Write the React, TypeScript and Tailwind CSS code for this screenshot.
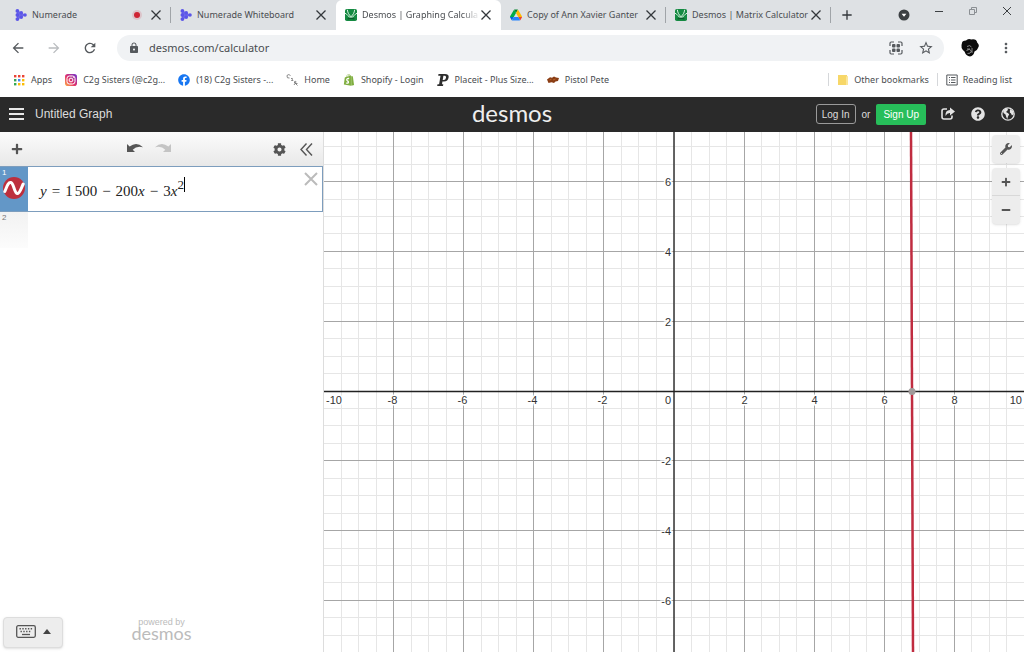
import type { ReactNode } from 'react';
import { MdArrowBack, MdArrowForward, MdRefresh, MdLock, MdStarOutline, MdMoreVert, MdAdd } from 'react-icons/md';
import { FaFacebook, FaShopify, FaWrench, FaCog, FaQuestionCircle, FaPlus, FaMinus } from 'react-icons/fa';

function NumeradeIcon() {
  return (
    <svg viewBox="0 0 12 12" className="size-3 shrink-0" fill="#5b55e8">
      <path d="M2 1 10.500 6 2 11Z" opacity=".8" />
      <circle cx="2.4" cy="1.9" r="1.9" />
      <circle cx="2.4" cy="6" r="1.9" />
      <circle cx="2.4" cy="10.1" r="1.9" />
      <circle cx="6.2" cy="3.9" r="1.9" />
      <circle cx="6.2" cy="8.1" r="1.9" />
      <circle cx="10" cy="6" r="1.8" />
    </svg>
  );
}

function DesmosIcon() {
  return (
    <svg viewBox="0 0 12 12" className="size-3 shrink-0">
      <rect width="12" height="12" rx="1.8" fill="#158a42" />
      <path d="M0 4.200C2.500 5 3 8.300 6 8.300S9.500 5 12 4.200M2.400.8C2.600 4 4 5.500 6 7.800 8 5.500 9.400 4 9.600.8" fill="none" stroke="#d9f2e1" strokeWidth="1" />
      <path d="M2.500 10q3.500-1.200 7 0" fill="none" stroke="#0a5a2a" strokeWidth="1.200" />
    </svg>
  );
}

function DriveIcon() {
  return (
    <svg viewBox="0 0 87 78" className="size-3 shrink-0">
      <path fill="#0066da" d="m6.6 66.85 3.85 6.65c.8 1.4 1.95 2.5 3.3 3.3l13.75-23.8H0c0 1.55.4 3.1 1.2 4.5z" />
      <path fill="#00ac47" d="M43.65 25 29.9 1.2c-1.35.8-2.5 1.9-3.3 3.3L1.2 48.5C.4 49.9 0 51.45 0 53h27.5z" />
      <path fill="#ea4335" d="M73.55 76.8c1.35-.8 2.5-1.9 3.3-3.3l9.25-16c.8-1.4 1.2-2.95 1.2-4.5H59.8l5.85 11.5z" />
      <path fill="#00832d" d="M43.65 25 57.4 1.2C56.05.4 54.5 0 52.9 0H34.4c-1.6 0-3.15.45-4.5 1.2z" />
      <path fill="#2684fc" d="M59.8 53H27.5L13.75 76.8c1.35.8 2.9 1.2 4.5 1.2h50.8c1.6 0 3.15-.45 4.5-1.2z" />
      <path fill="#ffba00" d="M73.4 26.5 60.7 4.5c-.8-1.4-1.95-2.5-3.3-3.3L43.65 25 59.8 53h27.45c0-1.55-.4-3.1-1.2-4.5z" />
    </svg>
  );
}

function CloseIcon() {
  return (
    <svg viewBox="0 0 12 12" className="size-3" fill="none" stroke="#33373b" strokeWidth="1.3">
      <path d="m1.5 1.5 9 9m0-9-9 9" />
    </svg>
  );
}

interface TabInfo {
  title: string;
  icon: ReactNode;
  active?: boolean;
  recording?: boolean;
  divider?: boolean;
}

const tabs: TabInfo[] = [
  { title: 'Numerade', icon: <NumeradeIcon />, recording: true, divider: true },
  { title: 'Numerade Whiteboard', icon: <NumeradeIcon /> },
  { title: 'Desmos | Graphing Calcula', icon: <DesmosIcon />, active: true },
  { title: 'Copy of Ann Xavier Ganter', icon: <DriveIcon />, divider: true },
  { title: 'Desmos | Matrix Calculator', icon: <DesmosIcon />, divider: true },
];

function Tab({ title, icon, active, recording, divider }: TabInfo) {
  return (
    <div className={`relative flex w-[165px] shrink items-center px-[9px] ${active ? 'rounded-t-md bg-white' : ''}`}>
      {icon}
      <button className={`ml-[5px] min-w-0 flex-1 overflow-hidden text-left whitespace-nowrap ${active ? 'mask-r-from-85%' : ''}`}>{title}</button>
      {recording && <span className="mr-[10px] size-[6px] rounded-full bg-[#cf2434] ring-2 ring-[#cf2434]/15" />}
      <button aria-label={`Close ${title}`}>
        <CloseIcon />
      </button>
      {divider && <span className="absolute top-[7px] right-0 h-4 w-px bg-[#a0a4a8]" />}
    </div>
  );
}

function TabStrip() {
  return (
    <div className="flex h-[30px] justify-between bg-[#dee1e4] pl-[6px] text-[9px] text-[#4a4d51]">
      <div className="flex min-w-0">
        {tabs.map((tab, i) => (
          <Tab key={i} {...tab} />
        ))}
        <button aria-label="New tab" className="px-2 text-[#33373b]">
          <MdAdd className="size-4" />
        </button>
      </div>
      <div className="flex items-center gap-6 pr-3 text-[#3c4043]">
        <button aria-label="Search tabs">
          <svg viewBox="0 0 12 12" className="size-3">
            <circle cx="6" cy="6" r="5.5" fill="#3c4043" />
            <path d="M3.6 4.8h4.8L6 7.8Z" fill="#fff" />
          </svg>
        </button>
        <div className="flex gap-6 pb-2">
          <button aria-label="Minimize">
            <svg viewBox="0 0 10 10" className="size-[10px]" stroke="#3c4043">
              <path d="M1 5.5h8" />
            </svg>
          </button>
          <button aria-label="Restore">
            <svg viewBox="0 0 10 10" className="size-[10px]" fill="none" stroke="#8b8f93">
              <path d="M1.5 3.5h5v5h-5zM3.5 3V1.5h5v5H7" />
            </svg>
          </button>
          <button aria-label="Close window">
            <svg viewBox="0 0 10 10" className="size-[10px]" stroke="#3c4043">
              <path d="m1 1 8 8m0-8L1 9" />
            </svg>
          </button>
        </div>
      </div>
    </div>
  );
}

function AddressBar() {
  return (
    <div className="flex h-9 items-center bg-white px-[10px] text-[#55595d]">
      <div className="flex w-[107px] gap-5">
        <button aria-label="Back"><MdArrowBack className="size-4" /></button>
        <button aria-label="Forward" className="text-[#b9bcbf]"><MdArrowForward className="size-4" /></button>
        <button aria-label="Reload"><MdRefresh className="size-4" /></button>
      </div>
      <div className="flex h-[26px] flex-1 items-center gap-[9px] rounded-full bg-[#f0f2f4] pr-[10px] pl-[11px]">
        <MdLock className="size-3" />
        <input aria-label="Address" defaultValue="desmos.com/calculator" className="min-w-0 flex-1 bg-transparent text-[11px] text-[#4a4d51] outline-none" />
        <button aria-label="QR code">
          <svg viewBox="0 0 14 14" className="size-[14px]" fill="none" stroke="#55595d" strokeWidth="1.2">
            <path d="M1 5V2.200Q1 1 2.200 1H5M9 1h2.800Q13 1 13 2.200V5M13 9v2.800Q13 13 11.800 13H9M5 13H2.200Q1 13 1 11.800V9" />
            <g fill="#55595d" stroke="none">
              <rect x="3" y="3" width="3.5" height="3.5" rx="1" />
              <rect x="7.5" y="3" width="3.5" height="3.5" rx="1" />
              <rect x="3" y="7.5" width="3.5" height="3.5" rx="1" />
              <rect x="7.5" y="7.5" width="3.5" height="3.5" rx="1" />
            </g>
          </svg>
        </button>
        <button aria-label="Bookmark this page" className="pl-[6px]"><MdStarOutline className="size-4" /></button>
      </div>
      <button aria-label="Profile" className="mr-[18px] ml-4">
        <svg viewBox="0 0 20 20" className="size-5">
          <path d="M2 5Q2 2.500 6 2.500 8 0 11.500 1.500q5-.8 5.800 3.300Q20 7 18 10q-1 3-3.500 3.500-1 4.500-4.500 5Q6 18 4.500 13.500 0 10 2 5Z" fill="#0c0c0c" />
          <path d="M7 8.500q3-2 4.500.5M6.500 12.500q3-2.500 5 .5-1 3-4 2.500M12 10v5M7 11h3" stroke="#a5a5a5" fill="none" strokeWidth=".8" />
        </svg>
      </button>
      <button aria-label="Menu"><MdMoreVert className="size-4" /></button>
    </div>
  );
}

function AppsIcon() {
  const colors = ['#ea4335', '#ea4335', '#ea4335', '#34a853', '#4285f4', '#fbbc05', '#34a853', '#fbbc05', '#fbbc05'];
  return (
    <svg viewBox="0 0 12 12" className="size-3">
      {colors.map((c, i) => (
        <rect key={i} x={1 + (i % 3) * 4} y={1 + Math.floor(i / 3) * 4} width="2.4" height="2.4" fill={c} />
      ))}
    </svg>
  );
}

function InstagramIcon() {
  return (
    <svg viewBox="0 0 12 12" className="size-3" fill="none" stroke="#fff">
      <defs>
        <linearGradient id="insta" x1="0" y1="1" x2="1" y2="0">
          <stop offset="0" stopColor="#fdb044" />
          <stop offset=".45" stopColor="#e1306c" />
          <stop offset="1" stopColor="#6a35d0" />
        </linearGradient>
      </defs>
      <rect width="12" height="12" rx="2.8" fill="url(#insta)" stroke="none" />
      <rect x="2" y="2" width="8" height="8" rx="2.4" />
      <circle cx="6" cy="6" r="1.9" />
      <circle cx="8.4" cy="3.6" r=".5" fill="#fff" stroke="none" />
    </svg>
  );
}

function SketchIcon() {
  return (
    <svg viewBox="0 0 12 12" className="size-3" fill="none" stroke="#7c7c7c" strokeWidth=".9">
      <path d="M4.500 1.500Q1.500-.5 1 2q-.3 2.500 2.500 2M5 4.500q2-.5 1.500.8L5.500 6.500h1.800M8 8q2.500-1.500 2 0L8 11M8 8l3.500 3.500M9 9.500h2.500" />
    </svg>
  );
}

function PlaceitIcon() {
  return (
    <svg viewBox="0 0 12 12" className="size-3">
      <path
        fillRule="evenodd"
        fill="#2e2e2e"
        d="M1.500 0H8q4.200 0 3.600 3.600Q11 7.600 6.800 7.600H5.400L5 10.300h1.300L6 12H.2l.3-1.700h1.600L3.500 1.700H1.200ZM6.400 1.700 5.700 6h1.100q1.800 0 2.200-2.300.3-2-1.500-2Z"
      />
    </svg>
  );
}

function PeteIcon() {
  return (
    <svg viewBox="0 0 12 12" className="size-3">
      <path d="M0 5.500 3 3.300l2 .5 2-1.200 2 1L12 4l-1 3-2.500.5L7 9 4.500 8.300 1.500 9Z" fill="#8a3d14" />
      <path d="m2.500 6 2-.8M6 6l2.500-1" stroke="#c9702f" strokeWidth=".7" />
    </svg>
  );
}

const bookmarks = [
  { label: 'Apps', icon: <AppsIcon /> },
  { label: 'C2g Sisters (@c2g...', icon: <InstagramIcon /> },
  { label: '(18) C2g Sisters -...', icon: <FaFacebook className="size-3 text-[#1877f2]" /> },
  { label: 'Home', icon: <SketchIcon /> },
  { label: 'Shopify - Login', icon: <FaShopify className="size-3 text-[#7fae3f]" /> },
  { label: 'Placeit - Plus Size...', icon: <PlaceitIcon /> },
  { label: 'Pistol Pete', icon: <PeteIcon /> },
];

function BookmarksBar() {
  return (
    <nav className="flex h-[31px] items-center justify-between bg-white pr-3 pb-1 pl-[13px] text-[9px] whitespace-nowrap text-[#4a4d51]">
      <div className="flex gap-[13px]">
        {bookmarks.map((b) => (
          <a key={b.label} href="#" className="flex items-center gap-[6px]">
            {b.icon}
            {b.label}
          </a>
        ))}
      </div>
      <div className="flex items-center">
        <a href="#" className="flex items-center gap-[5px] border-l border-[#d5d7da] px-2">
          <svg viewBox="0 0 12 12" className="size-3">
            <path d="M1 1h9v1.5h1V11H1Z" fill="#f7d768" />
            <path d="M9 2.5h2V11H9Z" fill="#fbe69a" />
          </svg>
          Other bookmarks
        </a>
        <a href="#" className="flex items-center gap-[5px] border-l border-[#d5d7da] pl-2">
          <svg viewBox="0 0 12 12" className="size-3" fill="none" stroke="#55595d">
            <path d="M.8 1h10.400v10H.8zM3 3.500h1M5 3.500h4.500M3 6h1M5 6h4.500M3 8.500h1M5 8.500h4.500" />
          </svg>
          Reading list
        </a>
      </div>
    </nav>
  );
}

function Header() {
  return (
    <header className="grid h-[35px] shrink-0 grid-cols-[1fr_auto_1fr] items-center bg-[#2a2a2a] px-[9px] pb-px text-[#ddd]">
      <div className="flex items-center gap-[11px]">
        <button aria-label="Open menu">
          <svg viewBox="0 0 15 12" className="h-3 w-[15px]" stroke="#e8e8e8" strokeWidth="2">
            <path d="M0 1h15M0 6h15M0 11h15" />
          </svg>
        </button>
        <button className="text-[12px]">Untitled Graph</button>
      </div>
      <a href="#" className="pb-[2px] font-['Lato',sans-serif] text-[24px] leading-8 text-[#eee]">desmos</a>
      <div className="flex items-center justify-end text-[10px]">
        <button className="h-5 rounded-[3px] border border-[#9a9a9a] px-[5px]">Log In</button>
        <span className="px-[6px]">or</span>
        <button className="h-[21px] rounded-xs bg-[#27be5a] px-[7px] text-white">Sign Up</button>
        <div className="flex gap-4 pl-[15px]">
          <button aria-label="Share">
            <svg viewBox="0 0 14 14" className="size-[14px]" fill="none" stroke="#e4e4e4" strokeWidth="1.6">
              <path d="M6 2H3Q1 2 1 4v6q0 2 2 2h6q2 0 2-2V8.500" />
              <path d="M9 .5 14 4.500 9 8.500V6Q6 5.800 4.500 9 4 3.200 9 3Z" fill="#e4e4e4" stroke="none" />
            </svg>
          </button>
          <button aria-label="Help"><FaQuestionCircle className="size-[14px] text-[#e4e4e4]" /></button>
          <button aria-label="Language">
            <svg viewBox="0 0 14 14" className="size-[14px]">
              <circle cx="7" cy="7" r="6.2" fill="none" stroke="#e4e4e4" strokeWidth="1.3" />
              <path d="M2 3.500 5 1.200l2 .6-.5 1.700L5 5l1.800 1 1.400 1.300L7 9.500l-.8 2.700-1-2.400L4.500 7.500 2.500 6ZM9 2l3 2 .8 3L11 8.500 10 6.500 8.800 5.500Z" fill="#e4e4e4" />
            </svg>
          </button>
        </div>
      </div>
    </header>
  );
}

function Formula() {
  return (
    <span className="flex items-baseline gap-[5px] font-['Liberation_Serif',serif] text-[15px] text-[#222]">
      <i>y</i>
      <span>=</span>
      <span className="flex gap-[2px]">
        <span>1</span>
        <span>500</span>
      </span>
      <span>−</span>
      <span>200<i>x</i></span>
      <span>−</span>
      <span>
        3<i>x</i>
        <sup className="border-r border-black text-[13px]">2</sup>
      </span>
    </span>
  );
}

function Sidebar() {
  return (
    <aside className="flex w-[324px] shrink-0 flex-col border-r border-[#ddd] bg-white">
      <div className="flex h-[34px] items-center bg-linear-to-b from-[#fcfcfc] to-[#e8e8e8] pr-[10px] pl-[11px] text-[#555]">
        <button aria-label="Add item"><FaPlus className="size-3" /></button>
        <div className="flex flex-1 justify-center gap-3 pb-[2px] pl-[2px]">
          <button aria-label="Undo">
            <svg viewBox="0 0 16 10" className="h-[10px] w-4" fill="currentColor">
              <path d="M0 1v8h8L5.700 6.700Q10 2.300 16 4.300 9.500-2 2.600 3.600Z" />
            </svg>
          </button>
          <button aria-label="Redo" disabled className="text-[#c4c4c4]">
            <svg viewBox="0 0 16 10" className="h-[10px] w-4" fill="currentColor">
              <path d="M16 1v8H8l2.300-2.300Q6 2.300 0 4.300 6.500-2 13.400 3.600Z" />
            </svg>
          </button>
        </div>
        <button aria-label="Edit list"><FaCog className="size-[13px]" /></button>
        <button aria-label="Hide list" className="ml-[14px]">
          <svg viewBox="0 0 13 13" className="size-[13px]" fill="none" stroke="currentColor" strokeWidth="1.4">
            <path d="M6.500.5 1 6.500l5.500 6M12 .5l-5.500 6 5.500 6" />
          </svg>
        </button>
      </div>

      <div className="flex h-[46px] border border-l-0 border-[#7d9dbd]">
        <div className="flex w-7 flex-col bg-[#6397c7] pt-px">
          <span className="pl-[2px] text-[8px] leading-[9px] text-white">1</span>
          <button aria-label="Hide graph" className="self-center">
            <svg viewBox="0 0 22 22" className="size-[22px]">
              <circle cx="11" cy="11" r="11" fill="#bd2f3d" />
              <path d="M1.800 14.500C4 9.500 5 5 7.800 5.500c3 .5 3.400 10.500 6.400 11 2.600.3 3.800-5 6-9.500" fill="none" stroke="#fff" strokeWidth="3" strokeLinecap="round" />
            </svg>
          </button>
        </div>
        <label className="flex flex-1 items-center pt-1 pl-3">
          <textarea aria-label="Expression 1" className="sr-only" />
          <Formula />
        </label>
        <button aria-label="Delete expression" className="self-start pt-[5px] pr-1">
          <svg viewBox="0 0 14 14" className="size-[14px]" stroke="#bbb" strokeWidth="2">
            <path d="m1 1 12 12M13 1 1 13" />
          </svg>
        </button>
      </div>
      <div className="h-9 w-7 bg-linear-to-b from-[#f2f2f2] to-[#fcfcfc] pt-px pl-[2px] text-[8px] leading-[9px] text-[#777]">2</div>

      <div className="mt-auto grid grid-cols-[60px_1fr_60px] px-[3px] pb-1">
        <button aria-label="Show keypad" className="flex h-[31px] items-center justify-center gap-[7px] rounded-sm border border-[#ddd] bg-[#ededed] pb-[2px] shadow-sm">
          <svg viewBox="0 0 20 13" className="h-[13px] w-5" fill="none" stroke="#555">
            <rect x=".7" y=".7" width="18.6" height="11.6" rx="1.5" strokeWidth="1.3" />
            <path d="M3.500 3.800h13M4.500 6.500h11" strokeWidth="1.400" strokeDasharray="1.400 1.400" />
            <path d="M6 9.500h8" strokeWidth="1.3" />
          </svg>
          <svg viewBox="0 0 8 5" className="h-[5px] w-2" fill="#444">
            <path d="M4 0 8 5H0Z" />
          </svg>
        </button>
        <a href="#" className="flex flex-col items-center text-[#bbb]">
          <span className="text-[9px] leading-[10px]">powered by</span>
          <span className="font-['Lato',sans-serif] text-[18px] leading-3">desmos</span>
        </a>
      </div>
    </aside>
  );
}

const ORIGIN = { x: 350, y: 259 };
const UNIT_X = 35.05;
const UNIT_Y = 34.9;
const halfSteps = Array.from({ length: 41 }, (_, i) => (i - 20) / 2);
const labels = [-8, -6, -4, -2, 2, 4, 6, 8];

// snap to half pixels so the grid lines stay sharp
const gridX = (n: number) => Math.floor(ORIGIN.x + n * UNIT_X) + 0.5;
const gridY = (n: number) => Math.floor(ORIGIN.y - n * UNIT_Y) + 0.5;

function Graph() {
  return (
    <main className="relative min-w-0 flex-1">
      <svg viewBox="0 0 700 520" preserveAspectRatio="xMidYMid slice" className="absolute inset-0 size-full bg-white">
        {halfSteps.map((n) => (
          <path key={n} d={`M${gridX(n)} 0V520M0 ${gridY(n)}H700`} stroke="#e6e6e6" />
        ))}
        {labels.map((n) => (
          <path key={n} d={`M${gridX(n)} 0V520M0 ${gridY(n)}H700`} stroke="#a6a6a6" />
        ))}
        <path d="M350 0V520" stroke="#333" strokeWidth="1.5" />
        <path d="M0 259.5H700" stroke="#222" strokeWidth="1.5" />

        <g className="font-['Liberation_Sans',sans-serif] text-[11px]" fill="#333" stroke="#fff" strokeWidth="3" paintOrder="stroke">
          {labels.map((n) => (
            <text key={n} x={n < 0 ? gridX(n) - 1 : gridX(n)} y="272" textAnchor="middle">{n}</text>
          ))}
          {labels.filter((n) => Math.abs(n) < 8).map((n) => (
            <text key={n} x="347" y={gridY(n) + 4} textAnchor="end">{n}</text>
          ))}
          <text x="347" y="272" textAnchor="end">0</text>
          <text x="2" y="272">-10</text>
          <text x="698" y="272" textAnchor="end">10</text>
        </g>

        <path d="M587 0 589 520" stroke="#c02c40" strokeWidth="2.5" />
        <circle cx="588" cy="259.5" r="3.5" fill="#a09a9a" />
      </svg>

      <div className="absolute top-[3px] right-1 flex w-7 flex-col gap-[5px] text-[#555]">
        <button aria-label="Graph settings" className="flex h-7 items-center justify-center rounded-sm bg-[#ededed] shadow">
          <FaWrench className="size-3" />
        </button>
        <div className="flex flex-col rounded-sm bg-[#ededed] shadow">
          <button aria-label="Zoom in" className="flex h-7 items-center justify-center border-b border-[#d8d8d8]">
            <FaPlus className="size-[10px]" />
          </button>
          <button aria-label="Zoom out" className="flex h-7 items-center justify-center">
            <FaMinus className="size-[10px]" />
          </button>
        </div>
      </div>
    </main>
  );
}

function App() {
  return (
    <div className="flex h-screen flex-col overflow-hidden bg-white font-['Liberation_Sans',sans-serif]">
      <div className="font-['Noto_Sans','Open_Sans',sans-serif]">
        <TabStrip />
        <AddressBar />
        <BookmarksBar />
      </div>
      <Header />
      <div className="flex min-h-0 flex-1">
        <Sidebar />
        <Graph />
      </div>
    </div>
  );
}

export default App;
